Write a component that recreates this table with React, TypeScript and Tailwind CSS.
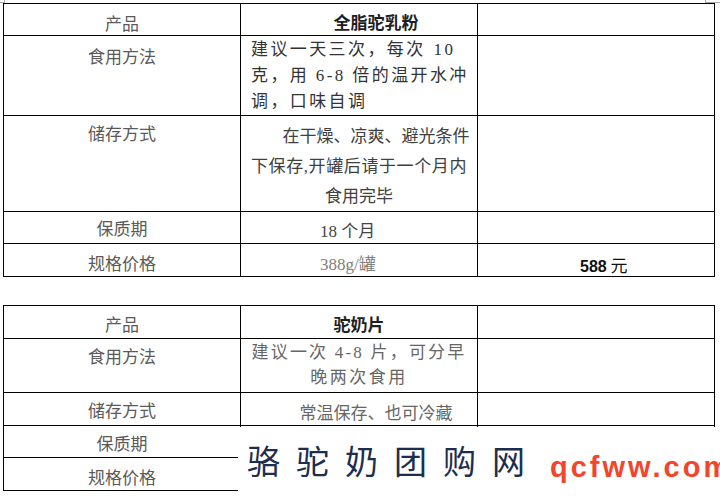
import React from "react";

type Row = {
  h: string;
  label: string;
  labelPt: string;
  content?: React.ReactNode;
  third?: React.ReactNode;
};

const FONT = "font-['Liberation_Serif','Noto_Sans_CJK_SC',serif]";

const TABLE_1: Row[] = [
  {
    h: "h-[32px]",
    label: "产品",
    labelPt: "pt-[11px]",
    content: (
      <div className="pt-[10px] text-center indent-[2em] text-[17px] leading-[20px] font-bold text-[#1f1f1f]">
        全脂驼乳粉
      </div>
    ),
  },
  {
    h: "h-[80px]",
    label: "食用方法",
    labelPt: "pt-[12px]",
    content: (
      <div className="pt-px pl-[10px] text-[17px] leading-[26px] tracking-[2.4px] text-[#333]">
        <div>
          建议一天三次，每次<span className="ml-[8px]">10</span>
        </div>
        <div>克，用 6-8 倍的温开水冲</div>
        <div>调，口味自调</div>
      </div>
    ),
  },
  {
    h: "h-[96px]",
    label: "储存方式",
    labelPt: "pt-[9px]",
    content: (
      <div className="pt-[6px] text-center text-[17px] leading-[30px] text-[#404040]">
        <div className="pl-[34px]">在干燥、凉爽、避光条件</div>
        <div className="tracking-[0.6px]">下保存,开罐后请于一个月内</div>
        <div>食用完毕</div>
      </div>
    ),
  },
  {
    h: "h-[32px]",
    label: "保质期",
    labelPt: "pt-[8px]",
    content: (
      <div className="pt-[10px] pl-[79px] text-[17px] leading-[20px] text-[#444]">18 个月</div>
    ),
  },
  {
    h: "h-[33px]",
    label: "规格价格",
    labelPt: "pt-[11px]",
    content: (
      <div className="pt-[11px] pl-[79px] text-[17px] leading-[20px] text-[#808080]">388g/罐</div>
    ),
    third: (
      <div className="pt-[11px] pl-[102px] leading-[20px] text-[#111]">
        <span className="font-['Liberation_Sans',sans-serif] text-[16px] font-bold">588</span>
        <span className="text-[17px] font-['Noto_Sans_CJK_SC',sans-serif]"> 元</span>
      </div>
    ),
  },
];

const TABLE_2: Row[] = [
  {
    h: "h-[33px]",
    label: "产品",
    labelPt: "pt-[10px]",
    content: (
      <div className="pt-[10px] text-center text-[17px] leading-[20px] font-bold text-[#1f1f1f]">驼奶片</div>
    ),
  },
  {
    h: "h-[54px]",
    label: "食用方法",
    labelPt: "pt-[9px]",
    content: (
      <div className="pt-px text-center text-[17px] leading-[25px] text-[#666]">
        <div className="tracking-[2.2px]">建议一次 4-8 片，可分早</div>
        <div className="tracking-[2.5px]">晚两次食用</div>
      </div>
    ),
  },
  {
    h: "h-[33px]",
    label: "储存方式",
    labelPt: "pt-[9px]",
    content: (
      <div className="pt-[11px] pl-[34px] text-center text-[17px] leading-[20px] text-[#666]">
        常温保存、也可冷藏
      </div>
    ),
  },
  { h: "h-[32px]", label: "保质期", labelPt: "pt-[9px]" },
  { h: "h-[33px]", label: "规格价格", labelPt: "pt-[11px]" },
];

function Table({ rows }: { rows: Row[] }) {
  return (
    <div className="w-[712px] border-l border-t border-black">
      {rows.map((r) => (
        <div key={r.label} className={`flex border-b border-black ${r.h}`}>
          <div className={`w-[237px] border-r border-black text-center text-[17px] leading-[20px] text-[#5a5a5a] ${r.labelPt}`}>
            {r.label}
          </div>
          <div className="w-[237px] border-r border-black">{r.content}</div>
          <div className="w-[237px] border-r border-black">{r.third}</div>
        </div>
      ))}
    </div>
  );
}

export default function App() {
  return (
    <div className={`relative h-[500px] w-[720px] overflow-hidden bg-white ${FONT}`}>
      {/* crop marks */}
      <span className="absolute left-0 top-[2px] h-px w-[4px] bg-[#aaa]" />
      <span className="absolute left-[4px] top-0 h-[3px] w-px bg-[#aaa]" />
      <span className="absolute left-[705px] top-[2px] h-px w-[15px] bg-[#aaa]" />
      <span className="absolute left-[705px] top-0 h-[3px] w-px bg-[#aaa]" />

      <div className="flex flex-col gap-[28px] pl-[3px] pt-[3px]">
        <Table rows={TABLE_1} />
        <Table rows={TABLE_2} />
      </div>

      {/* watermark */}
      <div className="absolute left-[238px] top-[427px] flex h-[73px] w-[482px] items-start bg-white">
        <span className="ml-[9px] mt-[16px] whitespace-nowrap font-['Noto_Sans_CJK_SC',sans-serif] text-[33px] font-normal leading-[34px] tracking-[16px] text-[#1d2d4f]">
          骆驼奶团购网
        </span>
        <span className="ml-[9px] mt-[26px] whitespace-nowrap font-['Liberation_Sans',sans-serif] text-[29px] font-bold leading-[29px] tracking-[3px] text-[#f2452b]">
          qcfww.com
        </span>
      </div>
    </div>
  );
}
